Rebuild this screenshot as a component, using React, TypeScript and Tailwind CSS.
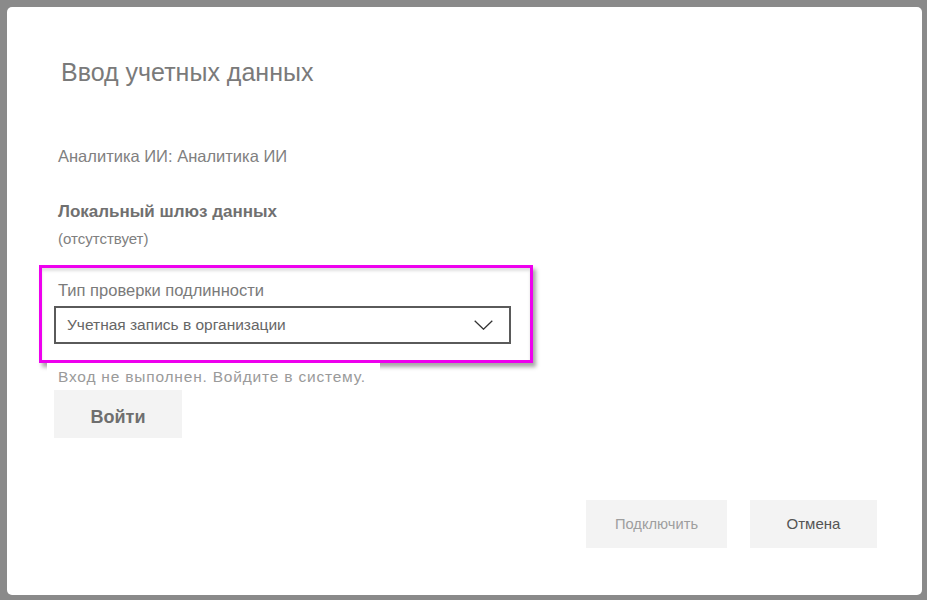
const font = { fontFamily: '"Liberation Sans", Arial, sans-serif' };

function Chevron() {
  return (
    <svg width="19" height="10" viewBox="0 0 19 10" fill="none" className="text-[#333]">
      <path d="M0.7 0.7 L9.5 9.2 L18.3 0.7" stroke="currentColor" strokeWidth="1.3" />
    </svg>
  );
}

export default function App() {
  return (
    <div className="w-[927px] h-[600px] bg-[#8a8a8a] p-[7px] pr-[5px] pb-[5px]" style={font}>
      <div className="h-full w-full bg-white rounded-[5px] flex flex-col pl-[47px] pr-[45px]">
        <h1 className="mt-[50px] ml-[7px] text-[25px] leading-[30px] text-[#7a7a7a]">
          Ввод учетных данных
        </h1>

        <p className="mt-[59px] ml-[4px] text-[16.5px] leading-[20px] text-[#808080]">
          Аналитика ИИ: Аналитика ИИ
        </p>

        <p className="mt-[35px] ml-[4px] text-[17px] leading-[22px] font-bold text-[#707070]">
          Локальный шлюз данных
        </p>
        <p className="mt-[7px] ml-[4px] text-[15px] leading-[18px] text-[#808080]">
          (отсутствует)
        </p>

        <div className="mt-[17px] -ml-[15px] w-[494px] h-[98px] border-[3px] border-[#ee00ee] shadow-[3px_4px_4px_rgba(0,0,0,0.35)] flex flex-col">
          <div className="h-full w-full shadow-[inset_0_3px_3px_rgba(0,0,0,0.12)] pt-[12px] pl-[12px]">
            <p className="ml-[4px] text-[16.5px] leading-[20px] text-[#7a7a7a]">Тип проверки подлинности</p>
            <div className="mt-[6px] w-[457px] h-[38px] border-[2px] border-[#5a5a5a] flex items-center justify-between pl-[11px] pr-[16px]">
              <span className="text-[15.5px] text-[#666]">Учетная запись в организации</span>
              <Chevron />
            </div>
          </div>
        </div>

        <div className="-ml-[7px] w-[333px] h-[24px] bg-white flex items-start pt-[4px] pl-[11px]">
          <span className="text-[15.5px] leading-[20px] text-[#9a9a9a] tracking-[0.8px]">
            Вход не выполнен. Войдите в систему.
          </span>
        </div>

        <button className="mt-[3px] w-[128px] h-[48px] bg-[#f3f3f3] text-[18px] font-bold text-[#6e6e6e] pt-[6px]">
          Войти
        </button>

        <div className="mt-[62px] flex justify-end gap-[23px]">
          <button className="w-[141px] h-[48px] bg-[#f3f3f3] text-[14.7px] text-[#9e9e9e]">
            Подключить
          </button>
          <button className="w-[127px] h-[48px] bg-[#f3f3f3] text-[15px] text-[#555]">
            Отмена
          </button>
        </div>
      </div>
    </div>
  );
}
